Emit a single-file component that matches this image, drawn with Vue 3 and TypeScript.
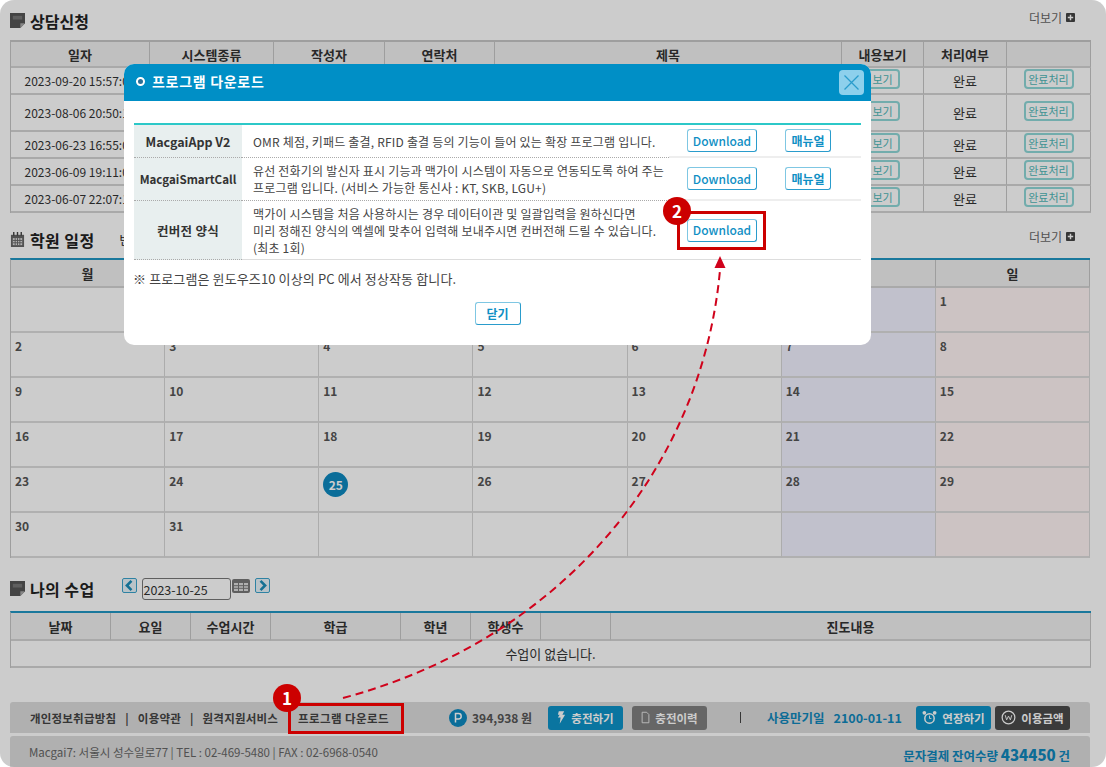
<template>
  <div class="page">
    <!-- 상담신청 -->
    <div class="sec-head sec-head-first">
      <div class="sec-title">
        <svg class="note-icon" viewBox="0 0 16 16"><path d="M0 0h16v11l-5 5H0z" fill="#555" /><path d="M11 16v-5h5z" fill="#aaa" /><path d="M3 3h10v4H3z" fill="#777" /></svg>
        <span>상담신청</span>
      </div>
      <a class="more">더보기 <svg viewBox="0 0 10 10" class="plus"><rect width="10" height="10" rx="1" fill="#444" /><path d="M5 2v6M2 5h6" stroke="#fff" stroke-width="1.6" /></svg></a>
    </div>
    <table class="grid consult">
      <colgroup><col v-for="w in consultCols" :key="w" :style="{ width: w + 'px' }" /></colgroup>
      <thead>
        <tr><th v-for="h in consultHeads" :key="h">{{ h }}</th></tr>
      </thead>
      <tbody>
        <tr v-for="row in consultRows" :key="row.date" :class="{ tall: row.tall }">
          <td>{{ row.date }}</td>
          <td></td>
          <td></td>
          <td></td>
          <td></td>
          <td><button class="mini view">보기</button></td>
          <td>완료</td>
          <td><button class="mini done">완료처리</button></td>
        </tr>
      </tbody>
    </table>

    <!-- 학원 일정 -->
    <div class="sec-head sec-head-cal">
      <div class="sec-title">
        <svg class="note-icon" viewBox="0 0 16 16"><path d="M1 3h14v13H1z" fill="#666" /><path d="M4 0v4M8 0v4M12 0v4" stroke="#444" stroke-width="1.5" /><path d="M3 6.500h10v7.500H3z" fill="#ddd" /><path d="M3 9h10M3 11.500h10M5.500 6.500v7.500M8 6.500v7.500M10.500 6.500v7.500" stroke="#666" /></svg>
        <span class="spaced">학원 일정</span>
        <span class="cal-note">반</span>
      </div>
      <a class="more">더보기 <svg viewBox="0 0 10 10" class="plus"><rect width="10" height="10" rx="1" fill="#444" /><path d="M5 2v6M2 5h6" stroke="#fff" stroke-width="1.6" /></svg></a>
    </div>
    <table class="grid cal top-blue">
      <thead>
        <!-- 화~토 머리글은 모달에 가려져 있음 -->
        <tr><th v-for="(d, i) in weekDays" :key="i">{{ d }}</th></tr>
      </thead>
      <tbody>
        <tr v-for="(week, i) in weeks" :key="i">
          <td v-for="(day, j) in week" :key="j" :class="{ sat: j === 5, sun: j === 6 }">
            <span v-if="day === 25" class="today">25</span>
            <span v-else class="day">{{ day }}</span>
          </td>
        </tr>
      </tbody>
    </table>

    <!-- 나의 수업 -->
    <div class="sec-head sec-head-class">
      <div class="sec-title">
        <svg class="note-icon" viewBox="0 0 16 16"><path d="M0 0h16v11l-5 5H0z" fill="#555" /><path d="M11 16v-5h5z" fill="#aaa" /><path d="M3 3h10v4H3z" fill="#777" /></svg>
        <span class="spaced">나의 수업</span>
      </div>
      <div class="date-nav">
        <button class="nav-btn"><svg viewBox="0 0 10 10"><path d="M6.500 1.500 3 5l3.500 3.500" fill="none" stroke="#1a8cb8" stroke-width="2" /></svg></button>
        <div class="date-input">2023-10-25</div>
        <svg class="grid-icon" viewBox="0 0 18 14"><rect width="18" height="14" rx="2" fill="#777" /><path d="M2 4h14v8H2z" fill="#ddd" /><path d="M2 6.700h14M2 9.300h14M6.500 4v8M11.500 4v8" stroke="#777" /></svg>
        <button class="nav-btn"><svg viewBox="0 0 10 10"><path d="M3.500 1.500 7 5 3.500 8.500" fill="none" stroke="#1a8cb8" stroke-width="2" /></svg></button>
      </div>
    </div>
    <table class="grid lesson top-blue">
      <colgroup><col v-for="(w, i) in lessonCols" :key="i" :style="{ width: w + 'px' }" /></colgroup>
      <thead>
        <tr><th v-for="(h, i) in lessonHeads" :key="i">{{ h }}</th></tr>
      </thead>
      <tbody>
        <tr><td colspan="8">수업이 없습니다.</td></tr>
      </tbody>
    </table>

    <!-- 하단 -->
    <div class="foot-bar">
      <div class="foot-links">
        <a>개인정보취급방침</a><i>|</i><a>이용약관</a><i>|</i><a>원격지원서비스</a>
        <a class="dl-link">프로그램 다운로드</a>
      </div>
      <div class="point">
        <svg viewBox="0 0 18 18" class="coin"><circle cx="9" cy="9" r="9" fill="#0d89c0" /><path d="M6.500 13.500v-9h3a2.700 2.700 0 0 1 0 5.400h-3" fill="none" stroke="#fff" stroke-width="1.500" /></svg>
        <b>394,938 원</b>
      </div>
      <button class="foot-btn blue charge">
        <svg viewBox="0 0 10 16" class="btn-icon"><path d="M2 1h6L6 5h3L3 15l1-7H1l2-3H1z" fill="#fff" /></svg>충전하기
      </button>
      <button class="foot-btn gray">
        <svg viewBox="0 0 12 16" class="btn-icon"><path d="M1.500 1h6l3 3v11h-9z" fill="none" stroke="#eee" stroke-width="1.200" /></svg>충전이력
      </button>
      <div class="foot-sep"></div>
      <div class="expire"><span>사용만기일</span><span>2100-01-11</span></div>
      <button class="foot-btn blue extend">
        <svg viewBox="0 0 16 16" class="btn-icon wide"><circle cx="8" cy="9" r="5" fill="none" stroke="#fff" stroke-width="1.600" /><circle cx="2.500" cy="3" r="2" fill="#fff" /><circle cx="13.500" cy="3" r="2" fill="#fff" /><path d="M8 6v3h2" fill="none" stroke="#fff" /></svg>연장하기
      </button>
      <button class="foot-btn dark">
        <svg viewBox="0 0 16 16" class="btn-icon wide"><circle cx="8" cy="8" r="6.800" fill="none" stroke="#fff" stroke-width="1.300" /><path d="m4.500 5.500 1.500 5 2-4 2 4 1.500-5" fill="none" stroke="#fff" /></svg>이용금액
      </button>
    </div>
    <div class="foot-info">
      <span class="addr">Macgai7: 서울시 성수일로77 | TEL : 02-469-5480 | FAX : 02-6968-0540</span>
      <span class="sms">문자결제 잔여수량 <b>434450</b> 건</span>
    </div>

    <!-- 어두운 배경 + 모달 -->
    <div class="dim"></div>
    <div class="modal">
      <div class="modal-head">
        <div class="modal-title"><span class="ring"></span>프로그램 다운로드</div>
        <button class="close-btn"><svg viewBox="0 0 24 24"><path d="M4 4l16 16M20 4 4 20" stroke="#2a9ccc" stroke-width="1.500" /></svg></button>
      </div>
      <div class="modal-body">
        <table class="prog">
          <colgroup><col style="width: 108px" /><col style="width: 427px" /><col style="width: 106px" /><col style="width: 86px" /></colgroup>
          <tbody>
            <tr v-for="p in programs" :key="p.name" :class="p.cls">
              <th>{{ p.name }}</th>
              <td class="desc"><template v-for="(line, i) in p.lines" :key="i">{{ line }}<br v-if="i < p.lines.length - 1" /></template></td>
              <td class="act"><button class="pbtn dl">Download</button></td>
              <td class="act"><button v-if="p.manual" class="pbtn man">매뉴얼</button></td>
            </tr>
          </tbody>
        </table>
        <p class="notice">※ 프로그램은 윈도우즈10 이상의 PC 에서 정상작동 합니다.</p>
        <div class="modal-foot"><button class="pbtn close-txt">닫기</button></div>
      </div>
    </div>

    <!-- 안내 표시 -->
    <svg class="guide" viewBox="0 0 1106 767">
      <path d="M343 698C560 640 702 470 720 270" fill="none" stroke="#d0021b" stroke-width="2" stroke-dasharray="8 5" />
      <path d="M720 256l-5.500 12h11z" fill="#d0021b" />
    </svg>
    <div class="red-box box-a"></div>
    <div class="red-box box-b"></div>
    <div class="badge badge-a">1</div>
    <div class="badge badge-b">2</div>
  </div>
</template>

<script setup lang="ts">
interface Program {
  name: string
  lines: string[]
  manual: boolean
  cls: string
}

const consultCols = [139, 124, 111, 110, 347, 82, 83, 84]
const consultHeads = ['일자', '시스템종류', '작성자', '연락처', '제목', '내용보기', '처리여부', '']
const consultRows = [
  { date: '2023-09-20 15:57:06', tall: false },
  { date: '2023-08-06 20:50:12', tall: true },
  { date: '2023-06-23 16:55:04', tall: false },
  { date: '2023-06-09 19:11:08', tall: false },
  { date: '2023-06-07 22:07:15', tall: false },
]

const weekDays = ['월', '', '', '', '', '', '일']
const blank = ''
const weeks: (number | string)[][] = [
  [blank, blank, blank, blank, blank, blank, 1],
  [2, 3, 4, 5, 6, 7, 8],
  [9, 10, 11, 12, 13, 14, 15],
  [16, 17, 18, 19, 20, 21, 22],
  [23, 24, 25, 26, 27, 28, 29],
  [30, 31, blank, blank, blank, blank, blank],
]

const lessonCols = [100, 80, 80, 130, 70, 70, 70, 480]
const lessonHeads = ['날짜', '요일', '수업시간', '학급', '학년', '학생수', '', '진도내용']

const programs: Program[] = [
  {
    name: 'MacgaiApp V2',
    lines: ['OMR 체점, 키패드 출결, RFID 출결 등의 기능이 들어 있는 확장 프로그램 입니다.'],
    manual: true,
    cls: 'r1',
  },
  {
    name: 'MacgaiSmartCall',
    lines: ['유선 전화기의 발신자 표시 기능과 맥가이 시스템이 자동으로 연동되도록 하여 주는', '프로그램 입니다. (서비스 가능한 통신사 : KT, SKB, LGU+)'],
    manual: true,
    cls: 'r2',
  },
  {
    name: '컨버전 양식',
    lines: ['맥가이 시스템을 처음 사용하시는 경우 데이터이관 및 일괄입력을 원하신다면', '미리 정해진 양식의 엑셀에 맞추어 입력해 보내주시면 컨버전해 드릴 수 있습니다.', '(최초 1회)'],
    manual: false,
    cls: 'r3',
  },
]
</script>

<style>
html,
body {
  margin: 0;
  background: #fff;
}
</style>

<style scoped>
.page {
  position: relative;
  width: 1106px;
  height: 767px;
  box-sizing: border-box;
  padding: 0 16px 0 10px;
  overflow: hidden;
  font-family: "Noto Sans CJK KR", "Noto Sans", sans-serif;
  font-size: 12px;
  color: #333;
  background: #fff;
}

.sec-head {
  display: flex;
  align-items: center;
  justify-content: space-between;
  width: 1080px;
  box-sizing: border-box;
}
.sec-head-first {
  height: 40px;
  padding-top: 1px;
}
.sec-head-cal {
  height: 45px;
  padding-top: 8px;
}
.sec-head-class {
  height: 53px;
  justify-content: flex-start;
  padding-top: 8px;
}
.sec-title {
  display: flex;
  align-items: center;
  gap: 5px;
  font-size: 16px;
  font-weight: 700;
  color: #222;
  line-height: 20px;
}
.spaced {
  letter-spacing: 0.4px;
}
.cal-note {
  margin-left: 20px;
  font-size: 12px;
  font-weight: 400;
}
.note-icon {
  flex-shrink: 0;
  width: 15px;
  height: 15px;
}
.more {
  display: flex;
  align-items: center;
  gap: 4px;
  padding-right: 15px;
  font-size: 12px;
  color: #666;
  margin-top: -6px;
}
.plus {
  width: 9px;
  height: 9px;
}

.grid {
  width: 1080px;
  table-layout: fixed;
  border-collapse: separate;
  border-spacing: 0;
  border-top: 2px solid #c6c6c6;
  border-left: 1px solid #c6c6c6;
}
.grid th {
  height: 26px;
  box-sizing: border-box;
  padding: 0;
  background: #f0f0f0;
  font-size: 13px;
  font-weight: 700;
  color: #333;
  border-right: 1px solid #c6c6c6;
  border-bottom: 2px solid #d4d4d4;
}
.grid td {
  box-sizing: border-box;
  padding: 0;
  text-align: center;
  border-right: 1px solid #c6c6c6;
  border-bottom: 2px solid #d4d4d4;
}
.consult td {
  height: 27px;
  font-size: 13px;
}
.consult td:first-child {
  font-size: 12px;
}
.consult .tall td {
  height: 37px;
}
.mini {
  display: block;
  margin: 0 auto 3px;
  height: 20px;
  box-sizing: border-box;
  padding: 0;
  border: 2px solid #8fd8d8;
  border-radius: 4px;
  background: transparent;
  font-family: inherit;
  font-size: 11px;
  line-height: 15px;
  color: #50b8b8;
}
.mini.view {
  width: 35px;
}
.mini.done {
  width: 50px;
}

.top-blue {
  border-top: 2px solid #2196c4;
}
.cal th {
  height: 28px;
}
.cal td {
  height: 45px;
  vertical-align: top;
  text-align: left;
  padding: 4px 0 0 4px;
  border-bottom-color: #dcdcdc;
  border-right-color: #d8d8d8;
}
.cal td.sat {
  background: #f2f2ff;
}
.cal td.sun {
  background: #fff4f4;
}
.day {
  font-size: 12px;
  font-weight: 700;
  color: #555;
}
.today {
  display: block;
  width: 25px;
  height: 25px;
  margin: 0;
  border-radius: 50%;
  background: #0d89c0;
  color: #fff;
  font-size: 12px;
  font-weight: 700;
  line-height: 25px;
  text-align: center;
}

.date-nav {
  display: flex;
  align-items: flex-start;
  margin: 1px 0 0 27px;
}
.nav-btn {
  width: 15px;
  height: 15px;
  padding: 0;
  border: 1px solid #3aa3cc;
  border-radius: 2px;
  background: #e8f4fa;
  display: flex;
}
.date-input {
  width: 89px;
  height: 22px;
  box-sizing: border-box;
  margin-left: 5px;
  padding-left: 1px;
  border: 1px solid #777;
  border-radius: 3px;
  background: transparent;
  font-size: 12.5px;
  line-height: 21px;
}
.grid-icon {
  flex-shrink: 0;
  width: 18px;
  height: 14px;
  margin: 1px 5px 0 1px;
}
.lesson th {
  height: 28px;
}
.lesson td {
  height: 27px;
  font-size: 13px;
}

.foot-bar {
  display: flex;
  align-items: center;
  width: 1080px;
  height: 31px;
  margin-top: 34px;
  border-radius: 3px 3px 0 0;
  background: #dcdcdc;
}
.foot-links {
  display: flex;
  align-items: center;
  width: 420px;
  box-sizing: border-box;
  padding-left: 20px;
  font-size: 11.5px;
  font-weight: 700;
  color: #444;
  letter-spacing: 0.2px;
}
.foot-links i {
  margin: 0 9px;
  font-style: normal;
}
.dl-link {
  margin-left: 20px;
  letter-spacing: 0.4px;
}
.point {
  display: flex;
  align-items: center;
  gap: 5px;
  width: 99px;
  margin-left: 19px;
  font-size: 12px;
  color: #555;
}
.coin {
  flex-shrink: 0;
  width: 18px;
  height: 18px;
}
.foot-btn {
  display: flex;
  align-items: center;
  justify-content: center;
  gap: 5px;
  width: 75px;
  height: 24px;
  padding: 0;
  border: 0;
  border-radius: 3px;
  font-family: inherit;
  font-size: 11.5px;
  font-weight: 700;
  color: #fff;
}
.foot-btn.blue {
  background: #0d93c8;
}
.foot-btn.gray {
  background: #808080;
  margin-left: 9px;
}
.foot-btn.dark {
  background: #4a4a4a;
  margin-left: 4px;
}
.btn-icon {
  flex-shrink: 0;
  width: 9px;
  height: 15px;
}
.btn-icon.wide {
  width: 15px;
}
.foot-sep {
  width: 1px;
  height: 11px;
  margin-left: 33px;
  background: #444;
}
.expire {
  display: flex;
  gap: 9px;
  width: 149px;
  margin-left: 26px;
  font-size: 12.5px;
  font-weight: 700;
  color: #1088bc;
}

.foot-info {
  display: flex;
  align-items: center;
  justify-content: space-between;
  width: 1080px;
  height: 32px;
  box-sizing: border-box;
  margin-top: 3px;
  padding: 0 20px 0 19px;
  border-radius: 3px 3px 0 0;
  background: #dcdcdc;
}
.addr {
  font-size: 11.5px;
  color: #666;
}
.sms {
  font-size: 12.5px;
  font-weight: 700;
  color: #1088bc;
  margin-top: 4px;
}
.sms b {
  font-size: 15px;
}

.dim {
  position: absolute;
  inset: 0;
  border-radius: 14px;
  background: rgba(0, 0, 0, 0.2);
}
.modal {
  position: absolute;
  left: 124px;
  top: 64px;
  width: 747px;
  height: 281px;
  border-radius: 10px;
  overflow: hidden;
  background: #fff;
}
.modal-head {
  display: flex;
  align-items: center;
  justify-content: space-between;
  height: 37px;
  padding: 0 7px 0 12px;
  background: #008fc6;
}
.modal-title {
  display: flex;
  align-items: center;
  gap: 7px;
  margin-top: -3px;
  font-size: 14px;
  font-weight: 700;
  letter-spacing: 0.7px;
  color: #fff;
}
.ring {
  width: 5px;
  height: 5px;
  border: 2.500px solid #fff;
  border-radius: 50%;
  background: #2a6f96;
}
.close-btn {
  width: 25px;
  height: 25px;
  padding: 2px;
  border: 0;
  border-radius: 4px;
  background: #8dd0ec;
}
.modal-body {
  padding: 22px 10px 0;
}
.prog {
  width: 727px;
  table-layout: fixed;
  border-collapse: separate;
  border-spacing: 0;
  border-top: 2px solid #2cc8c8;
}
.prog th {
  padding: 0;
  background: #e8efef;
  font-size: 12.5px;
  font-weight: 700;
  color: #333;
  border-bottom: 1px dotted #aaa;
}
.prog td {
  padding: 0;
  border-bottom: 2px solid #eee;
}
.prog .desc {
  padding-left: 11px;
  font-size: 12px;
  letter-spacing: 0.2px;
  line-height: 17px;
  color: #444;
  border-bottom: 1px dotted #aaa;
}
.r1 th {
  height: 32px;
}
.r2 th {
  height: 42px;
  font-size: 11.6px;
}
.r3 th {
  height: 58px;
  letter-spacing: 0.3px;
}
.r3 td {
  border-bottom: 1px solid #ddd !important;
}
.act {
  vertical-align: middle;
}
.pbtn {
  display: block;
  height: 23px;
  box-sizing: border-box;
  padding: 0;
  border: 1px solid #2a9ccc;
  border-top-color: #7fc7e3;
  border-left-color: #7fc7e3;
  border-radius: 3px;
  background: #fff;
  font-family: inherit;
  font-size: 12px;
  font-weight: 500;
  line-height: 20px;
  color: #0f8fc4;
}
.pbtn.dl {
  width: 70px;
  margin-left: 18px;
}
.pbtn.man {
  width: 46px;
  margin-left: 10px;
  font-weight: 700;
}
.notice {
  margin: 10px 0 0 -1px;
  font-size: 13px;
  letter-spacing: 0.12px;
  line-height: 18px;
  color: #444;
}
.modal-foot {
  display: flex;
  justify-content: center;
  margin-top: 14px;
}
.close-txt {
  width: 46px;
  font-weight: 700;
}

.guide {
  position: absolute;
  left: 0;
  top: 0;
  width: 1106px;
  height: 767px;
  pointer-events: none;
}
.red-box {
  position: absolute;
  box-sizing: border-box;
  border: 3px solid #cc0000;
}
.box-a {
  left: 288px;
  top: 703px;
  width: 116px;
  height: 31px;
}
.box-b {
  left: 677px;
  top: 211px;
  width: 89px;
  height: 39px;
}
.badge {
  position: absolute;
  width: 28px;
  height: 28px;
  border-radius: 50%;
  background: #cc0000;
  color: #fff;
  font-size: 17px;
  font-weight: 700;
  line-height: 27px;
  text-align: center;
}
.badge-a {
  left: 273px;
  top: 684px;
}
.badge-b {
  left: 663px;
  top: 197px;
}
</style>
